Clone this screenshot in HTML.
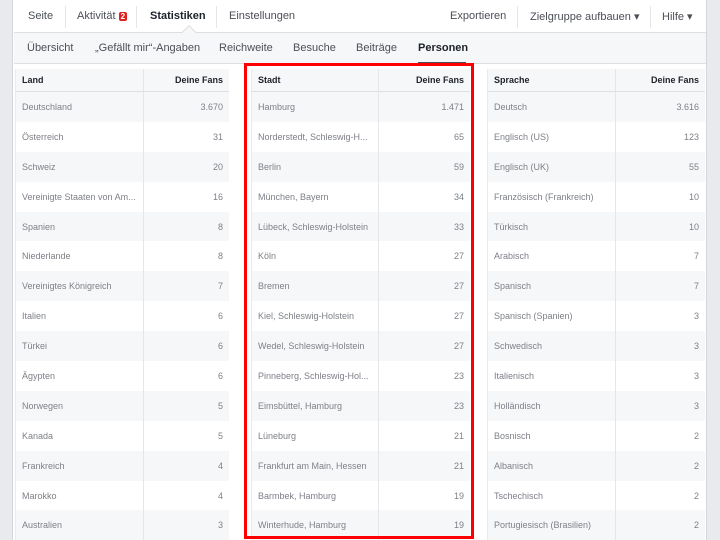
<!DOCTYPE html><html><head><meta charset="utf-8"><style>
*{margin:0;padding:0;box-sizing:border-box}
body{width:720px;height:540px;overflow:hidden;background:#fff;font-family:"Liberation Sans",sans-serif;position:relative}
.gl{position:absolute;left:0;top:0;width:13px;height:540px;background:#e9eaed;border-right:1px solid #d3d6db}
.gr{position:absolute;left:706px;top:0;width:14px;height:540px;background:#e9eaed;border-left:1px solid #d3d6db}
.nav{position:absolute;left:14px;top:0;width:692px;height:33px;border-bottom:1px solid #dddfe2;background:#fff;font-size:11px;color:#4b4f56}
.nav span{position:absolute;top:10px}
.sep{position:absolute;top:6px;width:1px;height:22px;background:#e5e6e9}
.sub{position:absolute;left:14px;top:33px;width:692px;height:31px;background:#f6f7f9;border-bottom:1px solid #dddfe2;font-size:11px;color:#4b4f56}
.sub span{position:absolute;top:9px}
.t{position:absolute;top:69px;font-size:9px;color:#7d8087}
.t .r{height:29.9px;position:relative;border-left:1px solid #e9eaed}
.t .r:nth-child(even){background:#f6f7f9}
.t .h{height:23px;background:#f6f7f9;border-bottom:1px solid #dddfe2;color:#1d2129;font-weight:bold;font-size:9px}
.t .a{position:absolute;left:6px;top:50%;transform:translateY(-50%)}
.t .b{position:absolute;right:6px;top:50%;transform:translateY(-50%)}
.t .v{position:absolute;top:0;bottom:0;width:1px;background:#e5e6e9}
.red{position:absolute;left:244px;top:63px;width:230px;height:476px;border:3px solid #f00}
</style></head><body>
<div class="gl"></div><div class="gr"></div>
<div class="nav">
<span style="left:14px">Seite</span><div class="sep" style="left:51px"></div>
<span style="left:63px">Aktivität <b style="background:#e0201f;color:#fff;font-size:8px;padding:0 2px;border-radius:2px">2</b></span>
<div class="sep" style="left:122px"></div>
<span style="left:136px;font-weight:bold;color:#1d2129">Statistiken</span><div class="sep" style="left:202px"></div>
<span style="left:215px">Einstellungen</span>
<span style="left:436px">Exportieren</span><div class="sep" style="left:503px"></div>
<span style="left:516px">Zielgruppe aufbauen ▾</span><div class="sep" style="left:636px"></div>
<span style="left:648px">Hilfe ▾</span>
<div style="position:absolute;left:170px;top:27px;width:10px;height:10px;background:#f6f7f9;border-left:1px solid #dddfe2;border-top:1px solid #dddfe2;transform:rotate(45deg)"></div>
</div>
<div class="sub">
<span style="left:13px">Übersicht</span><span style="left:81px">„Gefällt mir“-Angaben</span><span style="left:205px">Reichweite</span><span style="left:279px">Besuche</span><span style="left:342px">Beiträge</span><span style="left:404px;font-weight:bold;color:#1d2129">Personen</span>
<div style="position:absolute;left:404px;top:29px;width:48px;height:2px;background:#4b4f56"></div>
</div>
<div class="t" style="left:15px;width:214px" id="t1"></div>
<div class="t" style="left:251px;width:219px" id="t2"></div>
<div class="t" style="left:487px;width:218px" id="t3"></div>
<div class="red"></div>
<script>
function mk(id,hd,split,rows){var e=document.getElementById(id),s='<div class="r h"><span class="a">'+hd+'</span><span class="b">Deine Fans</span></div>';rows.forEach(function(r){s+='<div class="r"><span class="a">'+r[0]+'</span><span class="b">'+r[1]+'</span></div>'});s+='<div class="v" style="left:'+split+'px"></div>';e.innerHTML=s;}
mk('t1','Land',128,[["Deutschland","3.670"],["Österreich",31],["Schweiz",20],["Vereinigte Staaten von Am...",16],["Spanien",8],["Niederlande",8],["Vereinigtes Königreich",7],["Italien",6],["Türkei",6],["Ägypten",6],["Norwegen",5],["Kanada",5],["Frankreich",4],["Marokko",4],["Australien",3]]);
mk('t2','Stadt',127,[["Hamburg","1.471"],["Norderstedt, Schleswig-H...",65],["Berlin",59],["München, Bayern",34],["Lübeck, Schleswig-Holstein",33],["Köln",27],["Bremen",27],["Kiel, Schleswig-Holstein",27],["Wedel, Schleswig-Holstein",27],["Pinneberg, Schleswig-Hol...",23],["Eimsbüttel, Hamburg",23],["Lüneburg",21],["Frankfurt am Main, Hessen",21],["Barmbek, Hamburg",19],["Winterhude, Hamburg",19]]);
mk('t3','Sprache',128,[["Deutsch","3.616"],["Englisch (US)",123],["Englisch (UK)",55],["Französisch (Frankreich)",10],["Türkisch",10],["Arabisch",7],["Spanisch",7],["Spanisch (Spanien)",3],["Schwedisch",3],["Italienisch",3],["Holländisch",3],["Bosnisch",2],["Albanisch",2],["Tschechisch",2],["Portugiesisch (Brasilien)",2]]);
</script>
</body></html>
